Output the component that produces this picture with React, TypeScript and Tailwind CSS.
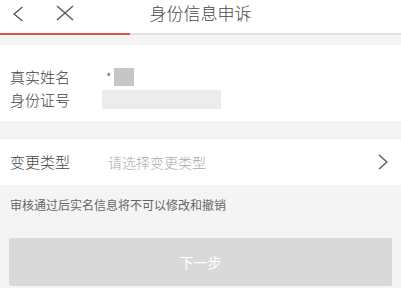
const font = { fontFamily: '"Noto Sans CJK SC", "Noto Sans", sans-serif' };

export default function App() {
  return (
    <div className="h-[288px] w-[401px] overflow-hidden bg-[#f4f4f4]" style={font}>
      {/* header */}
      <div className="relative flex h-[33px] items-start bg-white">
        <svg className="ml-[12px] mt-[6px] h-[16px] w-[12px]" viewBox="0 0 12 16" fill="none" stroke="#555" strokeWidth={1.3}>
          <polyline points="10.5,1 2,8 10.5,15" />
        </svg>
        <svg className="ml-[32px] mt-[5px] h-[16px] w-[18px]" viewBox="0 0 18 16" fill="none" stroke="#555" strokeWidth={1.3}>
          <line x1="1" y1="1" x2="17" y2="15" />
          <line x1="17" y1="1" x2="1" y2="15" />
        </svg>
        <div className="absolute left-0 right-0 top-0 text-center text-[17px] font-light leading-[26px] text-[#484848]">
          身份信息申诉
        </div>
      </div>
      <div className="flex h-[2px] bg-[#e2e2e2]">
        <div className="w-[130px] bg-[#d9534f]" />
      </div>
      <div className="h-[10px]" />

      {/* identity */}
      <div className="border-b border-[#ebebeb] bg-white pb-[11px] pl-[10px] pt-[20px] text-[15px] font-light leading-[23px] text-[#444]">
        <div className="flex items-center">
          <span className="w-[96px]">真实姓名</span>
          <span className="mr-[3px] text-[12px] text-[#444]">*</span>
          <div className="h-[18px] w-[20px] bg-[#c6c6c6]" />
        </div>
        <div className="flex items-center">
          <span className="w-[92px]">身份证号</span>
          <div className="h-[19px] w-[119px] bg-[#ececec]" />
        </div>
      </div>

      <div className="h-[15px]" />

      {/* change type */}
      <div className="flex h-[47px] items-center border-t border-[#ebebeb] bg-white pl-[10px] pr-[13px] font-light">
        <span className="w-[98px] text-[15px] text-[#444]">变更类型</span>
        <span className="flex-1 text-[14px] text-[#aaa]">请选择变更类型</span>
        <svg className="h-[16px] w-[10px]" viewBox="0 0 10 16" fill="none" stroke="#555" strokeWidth={1.3}>
          <polyline points="1,1 9,8 1,15" />
        </svg>
      </div>

      <div className="pl-[10px] pt-[11px] text-[12px] leading-[18px] text-[#666]">
        审核通过后实名信息将不可以修改和撤销
      </div>

      <div className="mx-[9px] mt-[24px] flex h-[48px] items-center justify-center rounded-[2px] bg-[#d9d9d9] text-[14px] text-white">
        下一步
      </div>
    </div>
  );
}
